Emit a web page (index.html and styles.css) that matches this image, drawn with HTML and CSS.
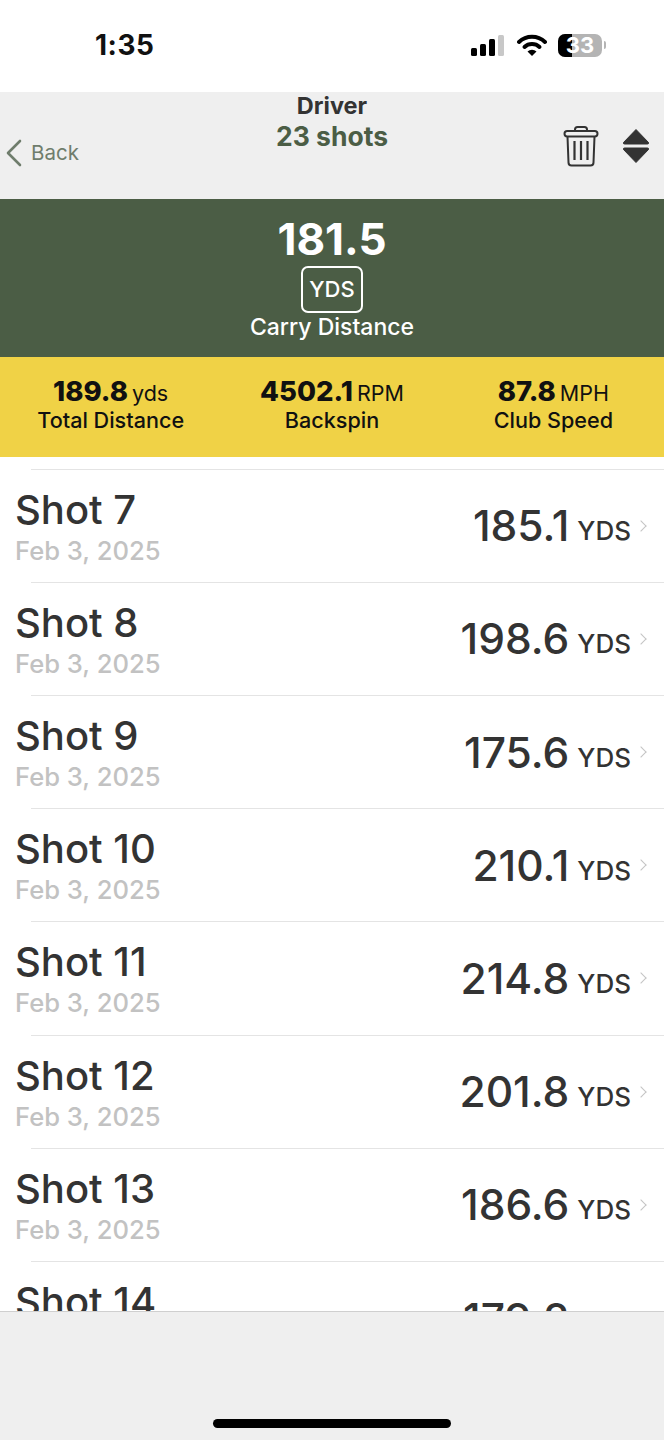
FILE: index.html
```html
<!doctype html>
<html lang="en">
    <head>
        <title>Driver</title>
        <link rel="stylesheet" href="styles.css">
    </head>
    <body>
        <div class="status">
            <span class="time">1:35</span>
            <div class="status-icons">
                <svg class="signal" width="36" height="22" viewBox="0 0 36 22">
                    <rect x="1" y="14" width="6" height="8" rx="1.5" fill="#000"/>
                    <rect x="10" y="10" width="6" height="12" rx="1.5" fill="#000"/>
                    <rect x="19" y="5" width="6" height="17" rx="1.5" fill="#000"/>
                    <rect x="28" y="1" width="6" height="21" rx="1.5" fill="#c8c8c8"/>
                </svg>
                <svg class="wifi" width="30" height="22" viewBox="0 0 30 22">
                    <path d="M2 8a19 19 0 0 1 26 0" fill="none" stroke="#000" stroke-width="4" stroke-linecap="round"/>
                    <path d="M7.5 13a11 11 0 0 1 15 0" fill="none" stroke="#000" stroke-width="4" stroke-linecap="round"/>
                    <path d="M10.5 17.5a6.5 6.5 0 0 1 9 0L15 22z" fill="#000"/>
                </svg>
                <div class="battery">
                    <span class="battery-fill"></span>
                    <span class="battery-text">33</span>
                </div>
                <span class="battery-cap"></span>
            </div>
        </div>

        <div class="nav">
            <div class="back">
                <svg width="18" height="28" viewBox="0 0 18 28">
                    <path d="M15 2L3 14l12 12" fill="none" stroke="#6f7d6c" stroke-width="2.6" stroke-linecap="round" stroke-linejoin="round"/>
                </svg>
                <span>Back</span>
            </div>
            <div class="nav-title">
                <div class="club">Driver</div>
                <div class="count">23 shots</div>
            </div>
            <div class="nav-actions">
                <svg width="36" height="42" viewBox="0 0 36 42">
                    <path d="M12 6V4.5A2.5 2.5 0 0 1 14.5 2h7A2.5 2.5 0 0 1 24 4.5V6" fill="none" stroke="#333" stroke-width="2"/>
                    <rect x="1.5" y="6" width="33" height="5.5" rx="2.7" fill="none" stroke="#333" stroke-width="2"/>
                    <path d="M4.5 11.5l1 26a3 3 0 0 0 3 3h19a3 3 0 0 0 3-3l1-26" fill="none" stroke="#333" stroke-width="2"/>
                    <path d="M11.5 16v19M18 16v19M24.5 16v19" fill="none" stroke="#333" stroke-width="2.2"/>
                </svg>
                <svg width="28" height="36" viewBox="0 0 28 36">
                    <path d="M14 1.5L26.5 14.5Q27 16 25.5 16h-23Q1 16 1.5 14.5z" fill="#333" stroke="#333" stroke-linejoin="round"/>
                    <path d="M2.5 20h23Q27 20 26.5 21.5L14 34.5 1.5 21.5Q1 20 2.5 20z" fill="#333" stroke="#333" stroke-linejoin="round"/>
                </svg>
            </div>
        </div>

        <div class="hero">
            <div class="hero-value">181.5</div>
            <div class="hero-unit">YDS</div>
            <div class="hero-label">Carry Distance</div>
        </div>

        <div class="stats">
            <div class="stat">
                <div class="stat-line"><b>189.8</b> yds</div>
                <div class="stat-label">Total Distance</div>
            </div>
            <div class="stat">
                <div class="stat-line"><b>4502.1</b> RPM</div>
                <div class="stat-label">Backspin</div>
            </div>
            <div class="stat">
                <div class="stat-line"><b>87.8</b> MPH</div>
                <div class="stat-label">Club Speed</div>
            </div>
        </div>

        <div class="list">
            <div class="row">
                <div class="row-left"><div class="shot">Shot 7</div><div class="date">Feb 3, 2025</div></div>
                <div class="row-value">185.1</div><div class="row-unit">YDS</div><div class="chev"></div>
            </div>
            <div class="row">
                <div class="row-left"><div class="shot">Shot 8</div><div class="date">Feb 3, 2025</div></div>
                <div class="row-value">198.6</div><div class="row-unit">YDS</div><div class="chev"></div>
            </div>
            <div class="row">
                <div class="row-left"><div class="shot">Shot 9</div><div class="date">Feb 3, 2025</div></div>
                <div class="row-value">175.6</div><div class="row-unit">YDS</div><div class="chev"></div>
            </div>
            <div class="row">
                <div class="row-left"><div class="shot">Shot 10</div><div class="date">Feb 3, 2025</div></div>
                <div class="row-value">210.1</div><div class="row-unit">YDS</div><div class="chev"></div>
            </div>
            <div class="row">
                <div class="row-left"><div class="shot">Shot 11</div><div class="date">Feb 3, 2025</div></div>
                <div class="row-value">214.8</div><div class="row-unit">YDS</div><div class="chev"></div>
            </div>
            <div class="row">
                <div class="row-left"><div class="shot">Shot 12</div><div class="date">Feb 3, 2025</div></div>
                <div class="row-value">201.8</div><div class="row-unit">YDS</div><div class="chev"></div>
            </div>
            <div class="row">
                <div class="row-left"><div class="shot">Shot 13</div><div class="date">Feb 3, 2025</div></div>
                <div class="row-value">186.6</div><div class="row-unit">YDS</div><div class="chev"></div>
            </div>
            <div class="row">
                <div class="row-left"><div class="shot">Shot 14</div><div class="date">Feb 3, 2025</div></div>
                <div class="row-value">179.2</div><div class="row-unit">YDS</div><div class="chev"></div>
            </div>
        </div>

        <div class="footer">
            <div class="home-bar"></div>
        </div>
    </body>
</html>
```

FILE: styles.css
```css
body {
    margin: 0;
    height: 1440px;
    overflow: hidden;
    display: flex;
    flex-direction: column;
    background: #fff;
    font-family: Inter, "Liberation Sans", sans-serif;
    color: #333;
}
.status {
    height: 92px;
    box-sizing: border-box;
    padding: 30px 58px 0 95px;
    display: flex;
    justify-content: space-between;
    align-items: flex-start;
}
.time {
    font-size: 28px;
    line-height: 30px;
    font-weight: 700;
    letter-spacing: .5px;
    color: #111;
}
.status-icons {
    display: flex;
    align-items: center;
    height: 30px;
}
.signal {
    margin-right: 11px;
}
.wifi {
    margin-right: 11px;
}
.battery {
    position: relative;
    width: 44px;
    height: 23px;
    border-radius: 7px;
    background: #b4b4b4;
}
.battery-fill {
    display: block;
    width: 14px;
    height: 23px;
    border-radius: 7px 0 0 7px;
    background: #000;
}
.battery-text {
    position: absolute;
    top: 0;
    left: 0;
    width: 44px;
    text-align: center;
    font-size: 22px;
    line-height: 23px;
    font-weight: 700;
    color: #fff;
}
.battery-cap {
    width: 2px;
    height: 8px;
    margin-left: 2px;
    border-radius: 0 2px 2px 0;
    background: #b4b4b4;
}
.nav {
    height: 107px;
    box-sizing: border-box;
    background: #efefef;
    display: grid;
    grid-template-columns: 1fr auto 1fr;
}
.back {
    display: flex;
    align-items: center;
    gap: 8px;
    padding: 14px 0 0 5px;
    font-size: 20.5px;
    color: #6f7d6c;
}
.nav-title {
    padding-top: 1px;
    text-align: center;
}
.club {
    font-size: 23.5px;
    line-height: 26px;
    font-weight: 700;
}
.count {
    font-size: 26.5px;
    line-height: 35px;
    font-weight: 700;
    color: #4b5d45;
}
.nav-actions {
    display: flex;
    justify-content: flex-end;
    align-items: center;
    gap: 23px;
    padding-right: 14px;
}
.hero {
    height: 158px;
    background: #4b5d45;
    color: #fff;
    display: flex;
    flex-direction: column;
    align-items: center;
    box-sizing: border-box;
    padding-top: 16px;
}
.hero-value {
    font-size: 44px;
    line-height: 48px;
    font-weight: 700;
}
.hero-unit {
    box-sizing: border-box;
    width: 62px;
    height: 47px;
    margin-top: 3px;
    border: 2px solid #fff;
    border-radius: 7px;
    text-align: center;
    font-size: 22px;
    line-height: 43px;
    font-weight: 500;
}
.hero-label {
    font-size: 23px;
    line-height: 28px;
    font-weight: 500;
}
.stats {
    height: 100px;
    box-sizing: border-box;
    background: #f0d246;
    color: #111;
    display: grid;
    grid-template-columns: repeat(3, 1fr);
    padding: 20px 0 0;
    text-align: center;
}
.stat-line {
    font-size: 21.5px;
    line-height: 28px;
    word-spacing: -2px;
}
.stat-line b {
    font-size: 27.5px;
    font-weight: 800;
}
.stat-label {
    font-size: 21.6px;
    line-height: 26px;
    font-weight: 500;
}
.list {
    flex: 1;
    min-height: 0;
    overflow: hidden;
    padding-top: 11.6px;
}
.row {
    height: 113.2px;
    box-sizing: border-box;
    border-top: 1.5px solid #e4e4e4;
    margin-left: 31px;
    padding-right: 16px;
    display: flex;
    align-items: center;
}
.row-left {
    flex: 1;
    margin-left: -16px;
    padding-top: 2px;
}
.shot {
    font-size: 40px;
    line-height: 44px;
    font-weight: 500;
}
.date {
    margin-top: 4px;
    font-size: 25.6px;
    line-height: 30px;
    font-weight: 500;
    color: #c2c2c2;
}
.row-value {
    font-size: 42.5px;
    font-weight: 500;
    margin-right: 8px;
}
.row-unit {
    font-size: 26px;
    font-weight: 500;
    margin-top: 10px;
}
.chev {
    width: 7px;
    height: 7px;
    margin: 0 3px 0 6px;
    border-top: 1.5px solid #c4c4c4;
    border-right: 1.5px solid #c4c4c4;
    transform: rotate(45deg);
}
.footer {
    height: 129px;
    box-sizing: border-box;
    flex: none;
    background: #efefef;
    border-top: 1.5px solid #cfcfcf;
    display: flex;
    justify-content: center;
    align-items: flex-end;
    padding-bottom: 12px;
}
.home-bar {
    width: 238px;
    height: 9px;
    border-radius: 5px;
    background: #000;
}
```
